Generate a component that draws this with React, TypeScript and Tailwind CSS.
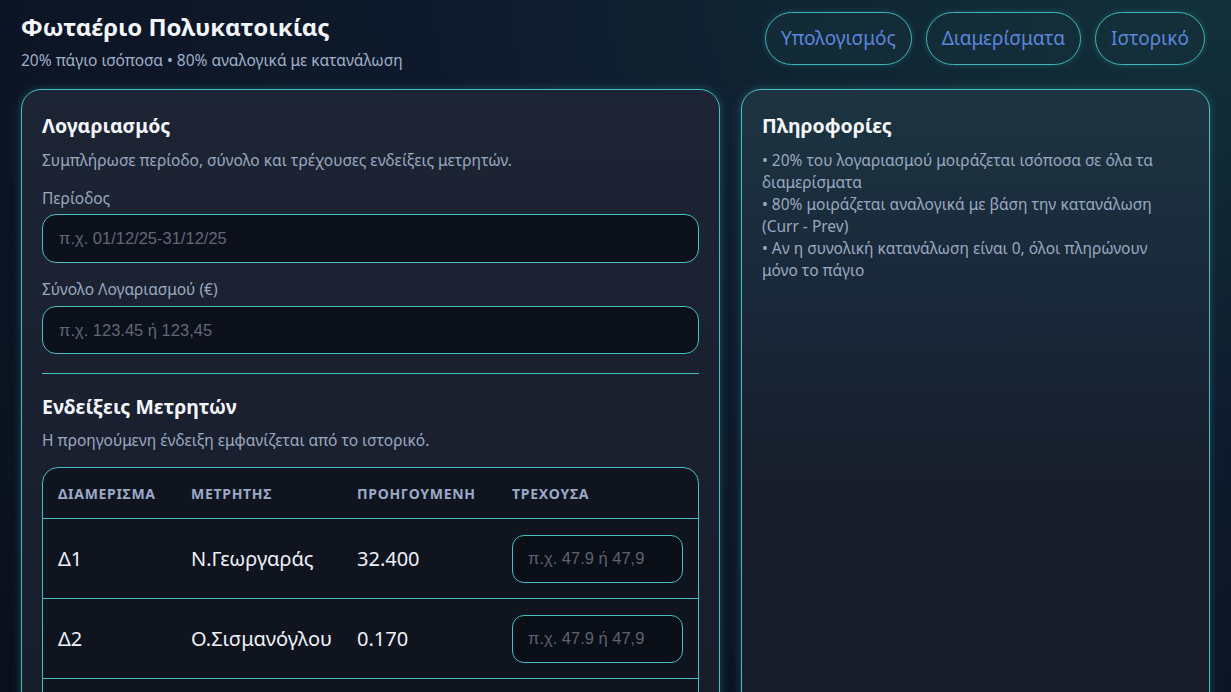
const rows = [
  { apt: "Δ1", meter: "Ν.Γεωργαράς", prev: "32.400" },
  { apt: "Δ2", meter: "Ο.Σισμανόγλου", prev: "0.170" },
  { apt: "Δ3", meter: "Κ.Παπαδόπουλος", prev: "12.050" },
];

const tabs = ["Υπολογισμός", "Διαμερίσματα", "Ιστορικό"];

export default function App() {
  return (
    <div
      className="h-[692px] overflow-hidden bg-[radial-gradient(ellipse_at_top_right,#12313a_0%,#0e1a2c_45%,#0a0f1c_100%)] px-[21px] text-[#e6ecf5]"
      style={{ fontFamily: '"Noto Sans", "Open Sans", sans-serif' }}
    >
      <header className="flex h-[89px] items-start justify-between pt-[11px]">
        <div>
          <h1 className="text-[24px] font-bold leading-[32px] text-[#f3f6fb]">Φωταέριο Πολυκατοικίας</h1>
          <p className="mt-[6px] text-[15.5px] leading-[22px] text-[#9fb0c8]">20% πάγιο ισόποσα • 80% αναλογικά με κατανάλωση</p>
        </div>
        <nav className="mt-[1px] flex gap-[14px] pr-[5px]">
          {tabs.map((t) => (
            <button
              key={t}
              className="h-[53px] rounded-full border border-[#3fb6bb] bg-[#16303a]/60 px-[15px] text-[19px] text-[#5d85dc] shadow-[0_0_6px_rgba(63,182,187,0.25)]"
            >
              {t}
            </button>
          ))}
        </nav>
      </header>

      <div className="grid grid-cols-[699px_1fr] gap-[21px]">
        <section className="h-[700px] rounded-[20px] border border-[#46bfc4] bg-[linear-gradient(180deg,#1d2434_0%,#171c29_100%)] px-[20px] pt-[23px] shadow-[0_0_8px_rgba(70,191,196,0.3)]">
          <h2 className="text-[19.5px] font-bold leading-[26px] text-[#f3f6fb]">Λογαριασμός</h2>
          <p className="mt-[10px] text-[15.5px] leading-[22px] text-[#9aa8c0]">Συμπλήρωσε περίοδο, σύνολο και τρέχουσες ενδείξεις μετρητών.</p>

          <label className="mt-[16px] block text-[15.5px] leading-[22px] text-[#9aa8c0]">Περίοδος</label>
          <input
            placeholder="π.χ. 01/12/25-31/12/25"
            className="mt-[5px] h-[49px] w-full rounded-[14px] border border-[#46bfc4] bg-[#0c101a] px-[16px] text-[16.5px] text-[#e6ecf5] placeholder:text-[#5f6878] outline-none"
            style={{ fontFamily: '"Liberation Sans", Arial, sans-serif' }}
          />

          <label className="mt-[15px] block text-[15.5px] leading-[22px] text-[#9aa8c0]">Σύνολο Λογαριασμού (€)</label>
          <input
            placeholder="π.χ. 123.45 ή 123,45"
            className="mt-[6px] h-[48px] w-full rounded-[14px] border border-[#46bfc4] bg-[#0c101a] px-[16px] text-[16.5px] text-[#e6ecf5] placeholder:text-[#5f6878] outline-none"
            style={{ fontFamily: '"Liberation Sans", Arial, sans-serif' }}
          />

          <div className="mt-[19px] h-px bg-[#46bfc4]" />

          <h2 className="mt-[20px] text-[19.5px] font-bold leading-[26px] text-[#f3f6fb]">Ενδείξεις Μετρητών</h2>
          <p className="mt-[9px] text-[15.5px] leading-[22px] text-[#9aa8c0]">Η προηγούμενη ένδειξη εμφανίζεται από το ιστορικό.</p>

          <div className="mt-[16px] overflow-hidden rounded-[16px] border border-[#46bfc4] bg-[#0f141f]">
            <div className="grid h-[51px] grid-cols-[133px_166px_155px_1fr] items-center border-b border-[#46bfc4] px-[15px] text-[14px] font-bold tracking-[0.05em] text-[#9aaac8]">
              <span>ΔΙΑΜΕΡΙΣΜΑ</span>
              <span>ΜΕΤΡΗΤΗΣ</span>
              <span>ΠΡΟΗΓΟΥΜΕΝΗ</span>
              <span>ΤΡΕΧΟΥΣΑ</span>
            </div>
            {rows.map((r) => (
              <div
                key={r.apt}
                className="grid h-[80px] grid-cols-[133px_166px_155px_1fr] items-center border-b border-[#46bfc4] px-[15px] text-[20px] text-[#eef2f8]"
              >
                <span>{r.apt}</span>
                <span>{r.meter}</span>
                <span>{r.prev}</span>
                <input
                  placeholder="π.χ. 47.9 ή 47,9"
                  className="h-[48px] w-[171px] rounded-[12px] border border-[#46bfc4] bg-[#0a0e17] px-[15px] text-[16.5px] text-[#e6ecf5] placeholder:text-[#5b6472] outline-none"
                  style={{ fontFamily: '"Liberation Sans", Arial, sans-serif' }}
                />
              </div>
            ))}
          </div>
        </section>

        <aside className="h-[700px] rounded-[20px] border border-[#46bfc4] bg-[linear-gradient(180deg,#1d3440_0%,#19283a_30%,#171c29_60%,#171c29_100%)] pl-[20px] pr-[40px] pt-[23px] shadow-[0_0_8px_rgba(70,191,196,0.3)]">
          <h2 className="text-[19.5px] font-bold leading-[26px] text-[#f3f6fb]">Πληροφορίες</h2>
          <ul className="mt-[10px] text-[15.5px] leading-[22px] text-[#9aa8c0]">
            <li>• 20% του λογαριασμού μοιράζεται ισόποσα σε όλα τα διαμερίσματα</li>
            <li>• 80% μοιράζεται αναλογικά με βάση την κατανάλωση (Curr - Prev)</li>
            <li>• Αν η συνολική κατανάλωση είναι 0, όλοι πληρώνουν μόνο το πάγιο</li>
          </ul>
        </aside>
      </div>
    </div>
  );
}
